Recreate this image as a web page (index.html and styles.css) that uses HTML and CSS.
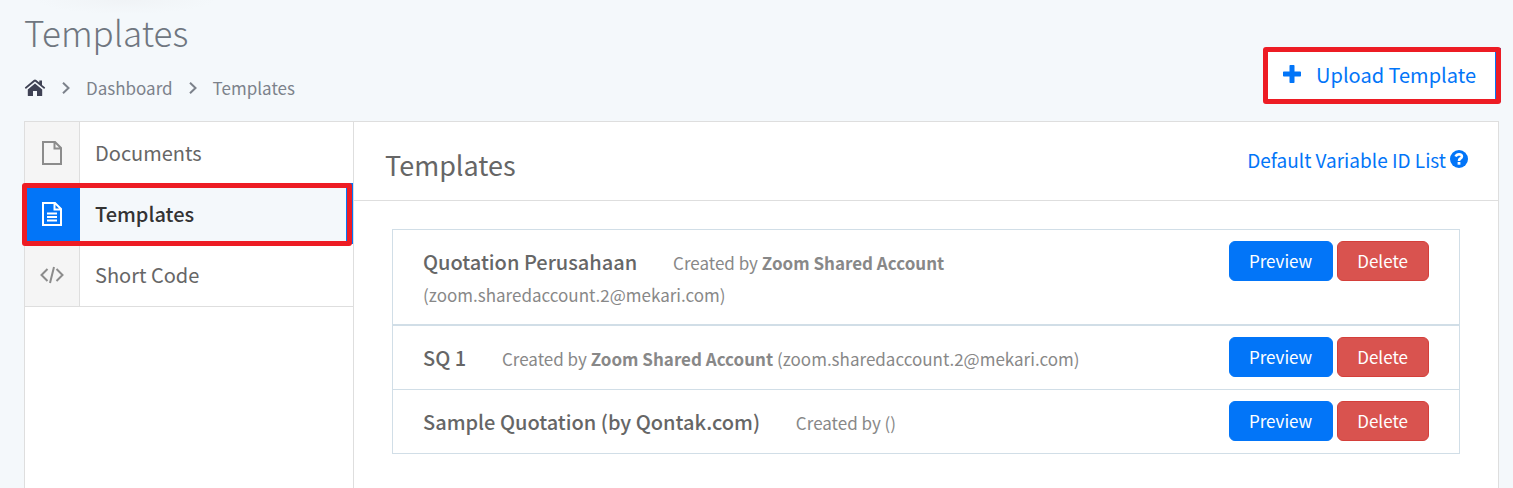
FILE: index.html
```html
<!DOCTYPE html>
<html lang="en">
<head>
<meta charset="utf-8">
<title>Templates</title>
<link rel="stylesheet" href="styles.css">
</head>
<body>
<header class="page-header">
  <div class="page-heading">
    <h1 class="page-title">Templates</h1>
    <nav class="breadcrumb" aria-label="Breadcrumb">
      <a class="home" href="#" aria-label="Home">
        <svg width="22" height="18" viewBox="0 0 22 18"><path fill="#3f4254" d="M11 4.4 18.2 10.6V16.4Q18.2 17 17.6 17H13V12H9V17H4.400Q3.800 17 3.800 16.400V10.600Z"/><path fill="#3f4254" d="M11 .6Q11.700 .6 12.300 1.100L15.300 3.600V1.400H18V5.900L21.200 8.600 20.200 9.900 11 2.500 1.800 9.900 .8 8.600 9.700 1.100Q10.300 .6 11 .6Z"/></svg>
      </a>
      <svg class="chevron" width="8" height="12" viewBox="0 0 8 12"><path d="M1 .8 6.500 6 1 11.200"/></svg>
      <a href="#">Dashboard</a>
      <svg class="chevron" width="8" height="12" viewBox="0 0 8 12"><path d="M1 .8 6.500 6 1 11.200"/></svg>
      <span>Templates</span>
    </nav>
  </div>
  <button class="upload marked" type="button">
    <svg width="18" height="18" viewBox="0 0 18 18"><path fill="#0275f8" d="M7.300 0H10.700Q11.500 0 11.500 .8V6.500H17.200Q18 6.500 18 7.300V10.700Q18 11.500 17.200 11.500H11.500V17.200Q11.500 18 10.700 18H7.300Q6.500 18 6.500 17.200V11.500H.8Q0 11.500 0 10.700V7.300Q0 6.500 .8 6.500H6.500V.8Q6.500 0 7.300 0Z"/></svg>
    Upload Template
  </button>
</header>
<main class="panel">
  <nav class="sidebar" aria-label="Sections">
    <a class="side-item" href="#">
      <span class="side-icon"><svg width="20" height="24" viewBox="0 0 20 24"><path d="M1 1H13L19 7V23H1ZM12.500 1V7.500H19"/></svg></span>
      <span class="side-label">Documents</span>
    </a>
    <a class="side-item active marked" href="#" aria-current="page">
      <span class="side-icon"><svg width="20" height="24" viewBox="0 0 20 24"><path d="M1 1H13L19 7V23H1ZM12.500 1V7.500H19M5 11.500H15M5 15H15M5 18.500H15"/></svg></span>
      <span class="side-label">Templates</span>
    </a>
    <a class="side-item" href="#">
      <span class="side-icon"><svg width="24" height="18" viewBox="0 0 24 18"><path d="M7.500 3 1.500 9 7.500 15M16.500 3 22.500 9 16.500 15M14 1 10 17"/></svg></span>
      <span class="side-label">Short Code</span>
    </a>
  </nav>
  <section class="content">
    <header class="content-header">
      <h2 class="content-title">Templates</h2>
      <a class="variable-link" href="#">Default Variable ID List
        <svg width="18" height="18" viewBox="0 0 18 18"><circle cx="9" cy="9" r="9" fill="#0275f8"/><path fill="none" stroke="#fff" stroke-width="2.600" d="M5.600 6.500Q6.600 4.200 9 4.200 11.900 4.300 11.900 6.500 11.900 7.700 10.400 8.500 9 9.300 9 10.900"/><path fill="#fff" d="M7.600 12H10.400V14.700H7.600Z"/></svg>
      </a>
    </header>
    <ul class="template-list">
      <li class="template wide">
        <p class="info"><span class="name">Quotation Perusahaan</span> Created by <strong>Zoom Shared Account</strong> (zoom.sharedaccount.2@mekari.com)</p>
        <div class="actions"><button class="btn preview" type="button">Preview</button><button class="btn delete" type="button">Delete</button></div>
      </li>
      <li class="template">
        <p class="info"><span class="name">SQ 1</span> Created by <strong>Zoom Shared Account</strong> (zoom.sharedaccount.2@mekari.com)</p>
        <div class="actions"><button class="btn preview" type="button">Preview</button><button class="btn delete" type="button">Delete</button></div>
      </li>
      <li class="template">
        <p class="info"><span class="name">Sample Quotation (by Qontak.com)</span> Created by ()</p>
        <div class="actions"><button class="btn preview" type="button">Preview</button><button class="btn delete" type="button">Delete</button></div>
      </li>
    </ul>
  </section>
</main>
</body>
</html>
```
FILE: styles.css
```css
* { box-sizing: border-box; }
body {
  margin: 0;
  min-height: 100vh;
  display: flex;
  flex-direction: column;
  background: #f4f8fb radial-gradient(ellipse 90px 14px at 125px 0, #f0f3f6, #f4f8fb) no-repeat;
  color: #666;
  font-family: "Noto Sans CJK SC", "Open Sans", sans-serif;
  font-size: 17px;
}
a { color: inherit; text-decoration: none; }
h1, h2, p, ul { margin: 0; padding: 0; }
svg { flex: none; }
button { font: inherit; cursor: pointer; }

.page-header {
  display: flex;
  justify-content: space-between;
  align-items: flex-end;
  padding: 6px 12px 19px 24px;
}
.page-title { font-size: 35px; font-weight: 300; line-height: 52px; color: #6f7680; }
.breadcrumb {
  display: flex;
  align-items: center;
  gap: 16px;
  padding-top: 16px;
  line-height: 28px;
  color: #7c828b;
}
.home { display: flex; }
.chevron { fill: none; stroke: #7c828b; stroke-width: 2; }
.upload {
  display: flex;
  align-items: center;
  gap: 15px;
  height: 54px;
  padding: 0 19px 2px 20px;
  border: 0;
  border-right: 6px solid #0275f8;
  background: #fff;
  color: #0275f8;
  font-size: 20px;
}
.marked { position: relative; }
.marked::after {
  content: "";
  position: absolute;
  inset: -1px -6px -2px 0;
  border: 5px solid #ed1c24;
  border-radius: 3px;
  pointer-events: none;
}

.panel {
  flex: 1;
  display: flex;
  margin: 0 14px 0 24px;
  border: 1px solid #dedede;
  border-bottom: 0;
  background: #fff;
}
.sidebar { width: 329px; border-right: 1px solid #dedede; }
.side-item { display: flex; height: 61px; font-size: 20px; }
.side-item:last-child { height: 63px; border-bottom: 1px solid #dedede; }
.side-icon {
  display: flex;
  align-items: center;
  justify-content: center;
  width: 55px;
  border-right: 1px solid #dedede;
  background: #f5f5f5;
}
.side-icon svg { fill: none; stroke: #8c8c8c; stroke-width: 2; }
.side-label { padding-left: 15px; line-height: 61px; }
.active { background: #f4f8fb; color: #333; font-weight: 500; border-right: 7px solid #0275f8; }
.active .side-icon { background: #0275f8; border-color: #0275f8; }
.active .side-icon svg { stroke: #fff; }
.active::after { inset: 0 -6px -2px -3px; }

.content { flex: 1; min-width: 0; }
.content-header {
  display: flex;
  justify-content: space-between;
  padding: 20px 30px 12px 31px;
  border-bottom: 1px solid #dedede;
}
.content-title { font-size: 27px; font-weight: 400; line-height: 46px; }
.variable-link { display: flex; align-items: center; gap: 4px; height: 34px; color: #0275f8; font-size: 19px; }
.template-list { margin: 28px 38px 0; border: 1px solid #d1dee7; list-style: none; }
.template {
  display: flex;
  justify-content: space-between;
  align-items: flex-start;
  padding: 11px 30px 12px;
}
.template + .template { border-top: 1px solid #d1dee7; }
.template.wide { border-bottom: 1px solid #d1dee7; }
.info { max-width: 700px; line-height: 32px; padding-top: 5px; color: #888; }
.template.wide .info { max-width: 600px; margin-bottom: 1px; }
.name { margin-right: 32px; color: #666; font-size: 20px; font-weight: 500; }
.actions { display: flex; gap: 4px; }
.btn {
  height: 40px;
  padding: 0 20px 2px 19px;
  border: 1px solid #0275f8;
  border-radius: 6px;
  background: #0275f8;
  color: #fff;
}
.delete { border-color: #d43f3a; background: #d9534f; }
```
